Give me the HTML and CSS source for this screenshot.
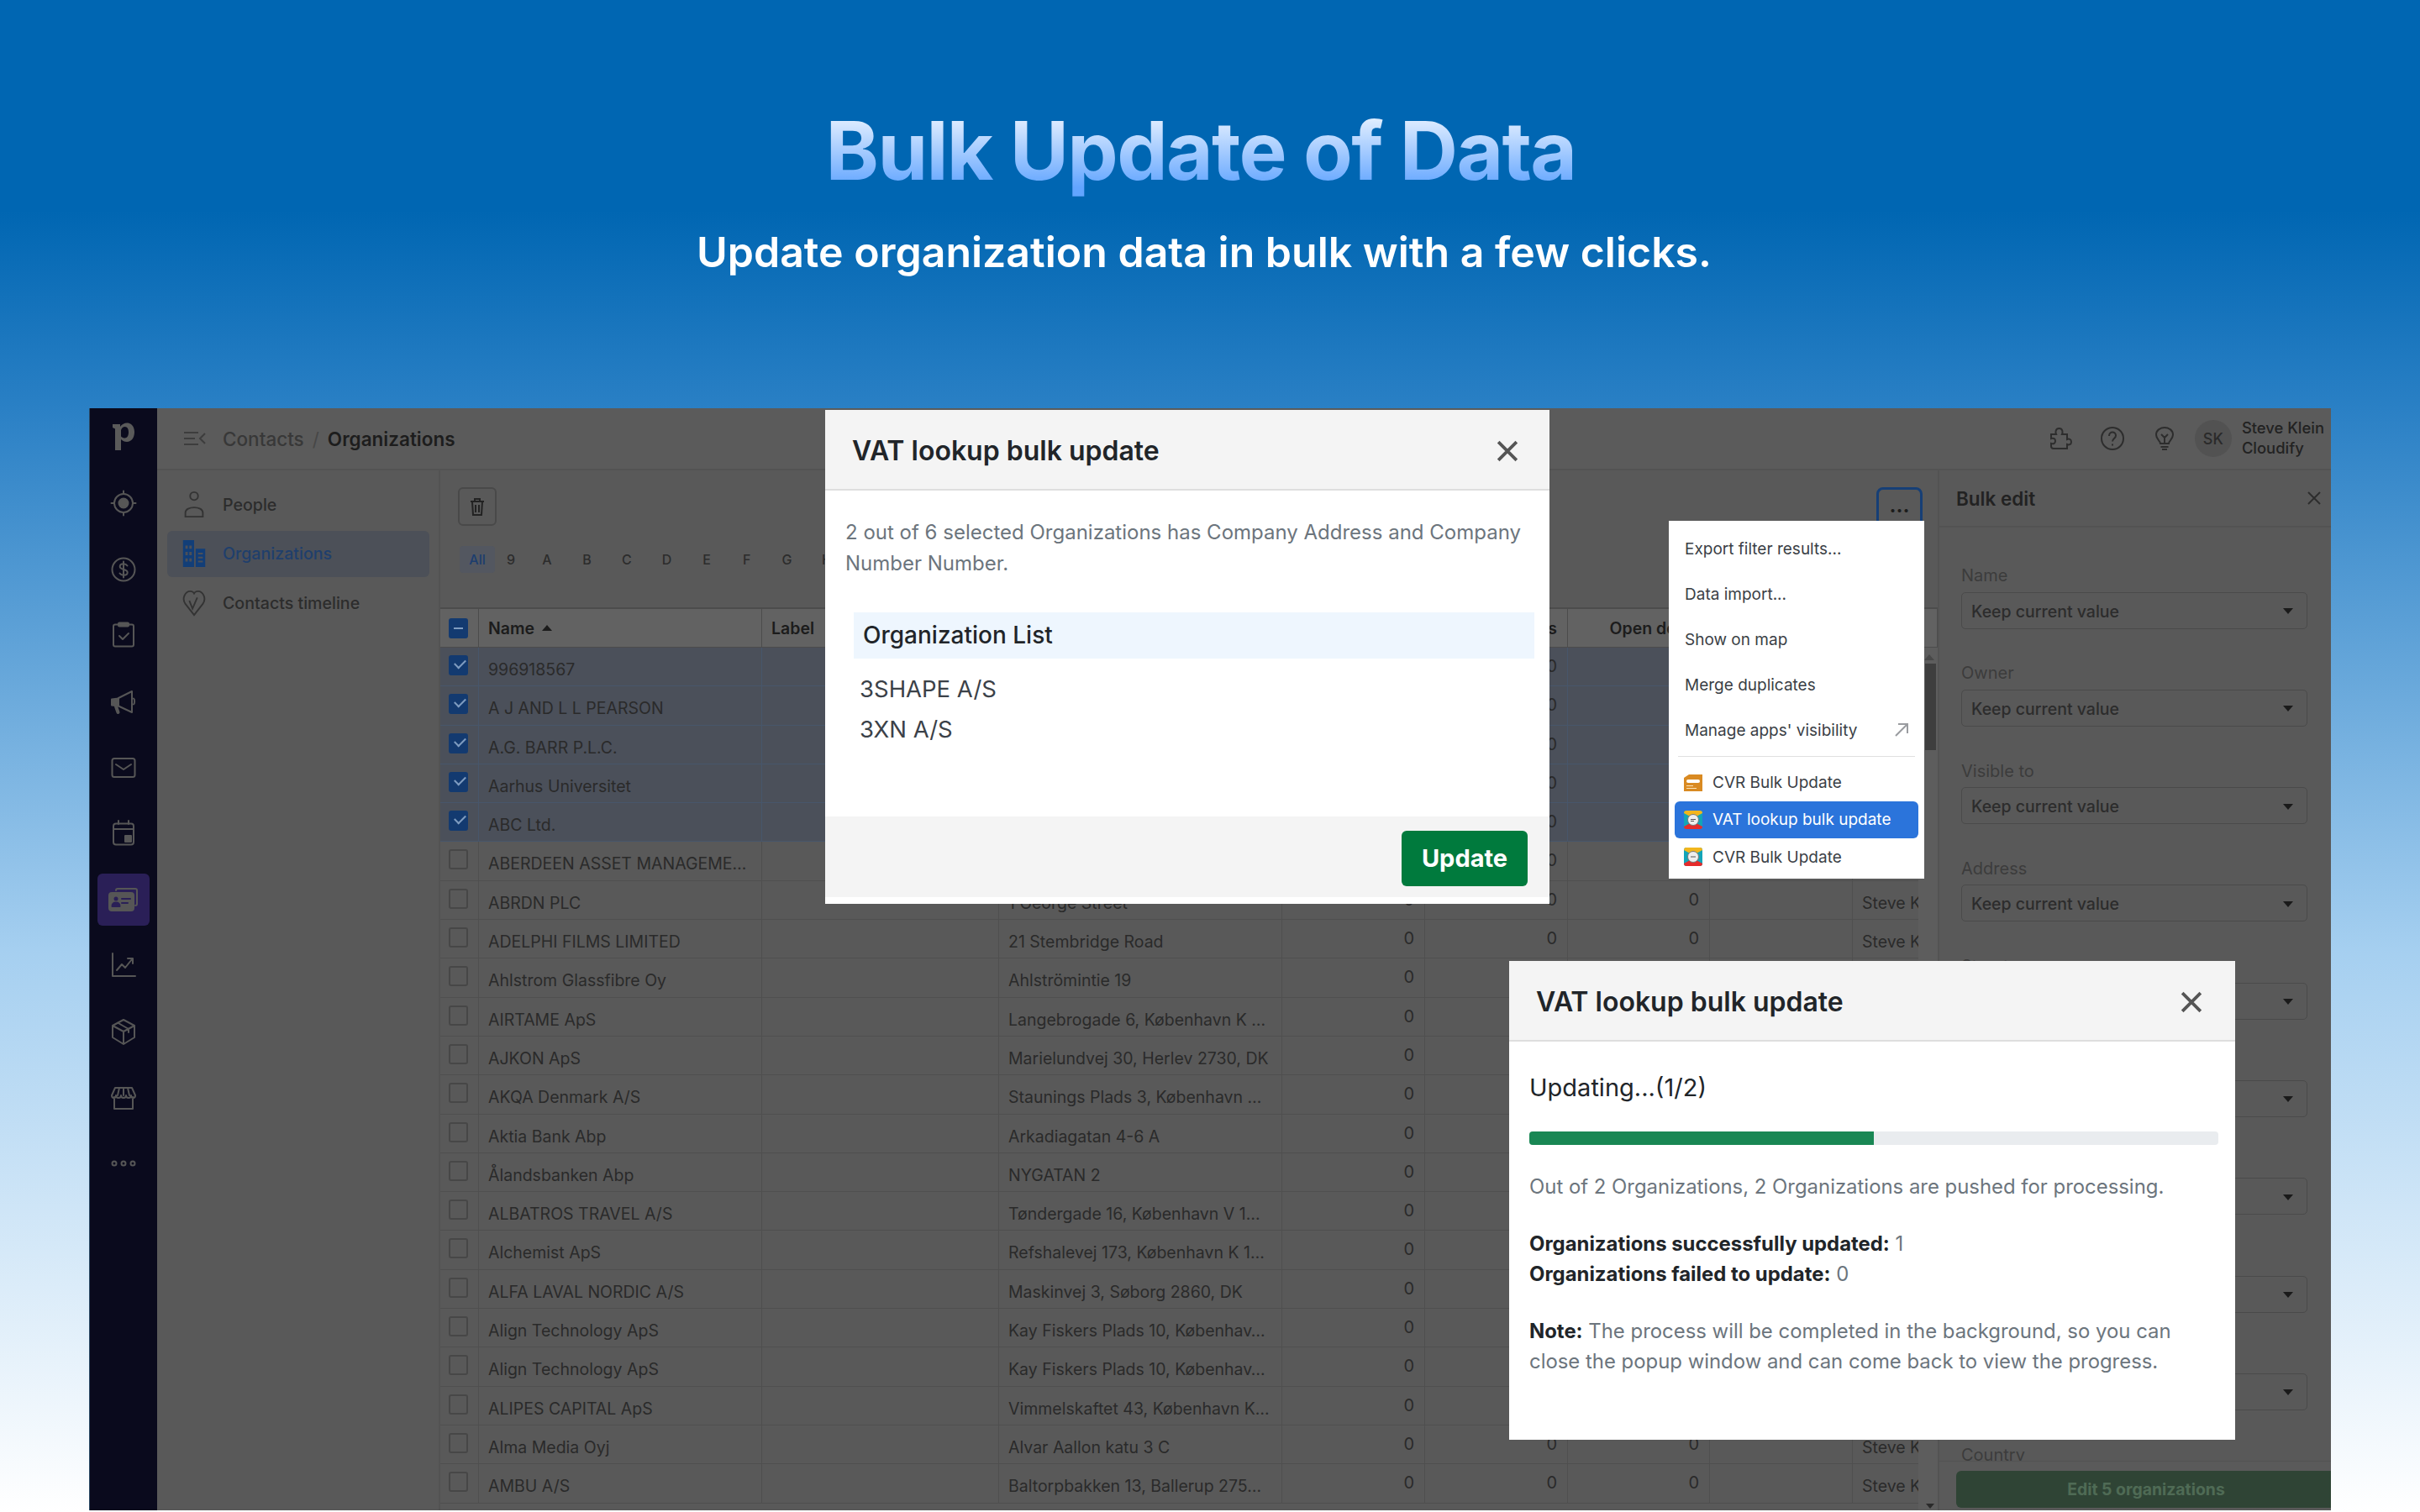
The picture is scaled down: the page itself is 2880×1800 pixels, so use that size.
FILE: index.html
```html
<!DOCTYPE html>
<html lang="en">
<head>
<meta charset="utf-8">
<title>Bulk Update of Data</title>
<link rel="stylesheet" href="styles.css">
</head>
<body>
<header class="hero">
  <h1 class="hero-title">Bulk Update of Data</h1>
  <p class="hero-sub">Update organization data in bulk with a few clicks.</p>
</header>

<section class="app">
  <nav class="rail">
    <div class="rail-logo">
      <svg class="logo" viewBox="0 0 26 34"><path fill-rule="evenodd" d="M0 2h9v3c2-3 5-4.500 8-4.500 5.500 0 9 4.500 9 11S22.500 23 17 23c-3 0-5-1-7-3v13H3V7.500L0 6zM10 9v7.500c1.500 1.500 3 2 4.500 2 3 0 4.500-3 4.500-7s-1.500-6.500-4.500-6.500c-2 0-3.500 1.500-4.500 4z"/></svg>
    </div>
    <div class="rail-item"><svg class="ri" viewBox="0 0 32 32"><circle cx="16" cy="16" r="11"/><circle class="solid" cx="16" cy="16" r="5.500"/><path d="M16 1.500v3M16 27.500v3M1.500 16h3M27.500 16h3"/></svg></div>
    <div class="rail-item"><svg class="ri" viewBox="0 0 32 32"><circle cx="16" cy="16" r="13.500"/><path d="M20.500 11.500c-1-1.500-2.500-2.200-4.500-2.200-2.500 0-4.300 1.300-4.300 3.300 0 4.500 9 2.400 9 6.900 0 2-2 3.200-4.500 3.200-2 0-3.700-.7-4.700-2.200M16 6.500v19"/></svg></div>
    <div class="rail-item"><svg class="ri" viewBox="0 0 32 32"><rect x="4" y="3.500" width="24" height="26" rx="2"/><rect class="solid" x="10" y="1.500" width="12" height="4" rx="1"/><path d="M11 17l4 4 7-7"/></svg></div>
    <div class="rail-item"><svg class="ri" viewBox="0 0 32 32"><path class="solid" d="M2 13.500l8-1v9l-8-1z"/><path d="M10 12L26 4v25L10 21.500"/><path d="M28 12.500c1.500 1 1.500 6 0 7"/><path class="wide" d="M7 22l2.500 7"/></svg></div>
    <div class="rail-item"><svg class="ri" viewBox="0 0 32 32"><rect x="2.500" y="5" width="27" height="22" rx="2.500"/><path d="M7 12l9 6 9-6"/></svg></div>
    <div class="rail-item"><svg class="ri" viewBox="0 0 32 32"><rect x="4" y="4.500" width="24" height="25" rx="3"/><path d="M4 11h24M10 1v4M22 1v4"/><rect class="solid" x="18" y="19" width="7" height="7"/></svg></div>
    <div class="rail-item"><div class="rail-active"><svg class="ri ri-big" viewBox="0 0 36 32"><path d="M9 5a2 2 0 0 1 2-2h21a2 2 0 0 1 2 2v16a2 2 0 0 1-2 2"/><rect class="solid" x="1" y="8" width="29" height="21" rx="3"/><circle class="cut" cx="9" cy="15" r="2.500"/><path class="cut-line" d="M4.500 24c0-3 2-4.500 4.500-4.500s4.500 1.500 4.500 4.500zM16 15h10M16 20h7"/></svg></div></div>
    <div class="rail-item"><svg class="ri" viewBox="0 0 32 32"><path d="M3 2v27h27M8 22l6-7 4 4 8-10M21 8h6v6"/></svg></div>
    <div class="rail-item"><svg class="ri" viewBox="0 0 32 32"><path d="M16 2l13 7v14l-13 8-13-8V9zM3 9l13 7 13-7M16 16v15M9 5.500l13 7.500v4"/></svg></div>
    <div class="rail-item"><svg class="ri" viewBox="0 0 32 32"><path d="M5 15v14h22V15M6 4h20l4 9c0 4-5 4-5 0 0 4-6 4-6 0 0 4-6 4-6 0 0 4-6 4-6 0 0 4-5 4-5 0zM11 4l-2 9M16 4v9M21 4l2 9"/></svg></div>
    <div class="rail-item"><svg class="ri" viewBox="0 0 32 32"><circle cx="5" cy="16" r="2.500"/><circle cx="16" cy="16" r="2.500"/><circle cx="27" cy="16" r="2.500"/></svg></div>
  </nav>

  <div class="workspace">
    <div class="topbar">
      <svg class="menu-toggle" viewBox="0 0 26 18"><path d="M0 2h17M0 9h13M0 16h17M25 3l-6 6 6 6"/></svg>
      <span class="crumb">Contacts</span><span class="crumb-sep">/</span><span class="crumb-current">Organizations</span>
      <div class="topbar-right">
        <svg class="top-icon" viewBox="0 0 28 28"><path d="M3 9h6c-1-2-1-7 3.500-7S17 7 16 9h6v6c2-1 5-.5 5 3s-3 4-5 3v5H6a3 3 0 0 1-3-3v-3c3 1 5-.5 5-3s-2-4-5-3z"/></svg>
        <svg class="top-icon" viewBox="0 0 28 28"><circle cx="14" cy="14" r="13"/><path d="M10 11c0-3 2-4.500 4-4.500s4 1.500 4 4c0 3.500-4 3.500-4 7M14 20.500v2"/></svg>
        <svg class="top-icon" viewBox="0 0 28 28"><path d="M9 20c0-3-5-5-5-10.500C4 4.500 8.500 1 14 1s10 3.500 10 8.500C24 15 19 17 19 20zM9.500 24h9M11 27h6M10 9l4 4 4-4M14 13v7"/></svg>
        <span class="avatar">SK</span>
        <div class="user"><span>Steve Klein</span><span>Cloudify</span></div>
      </div>
    </div>

    <div class="columns">
      <aside class="subnav">
        <a class="subnav-item"><svg class="sub-icon" viewBox="0 0 28 36"><circle cx="14" cy="7" r="5"/><path d="M3 33v-5c0-9 22-9 22 0v5z"/></svg>People</a>
        <a class="subnav-item is-active"><svg class="sub-icon solid-icon" viewBox="0 0 28 36"><path fill-rule="evenodd" d="M0 1h14v34H0zM3 8v4h3V8zm5 0v4h3V8zM3 16v4h3v-4zm5 0v4h3v-4zM3 24v4h3v-4zm5 0v4h3v-4zM16 12h12v23H16zm3 5v2h6v-2zm0 5v2h6v-2zm0 5v2h6v-2z"/></svg>Organizations</a>
        <a class="subnav-item"><svg class="sub-icon" viewBox="0 0 28 36"><path d="M14 33L3 19C-2 12 3 3 9 3c3 0 5 2 5 4 0-2 2-4 5-4 6 0 11 9 6 16zM8 15l4 10 6-14"/></svg>Contacts timeline</a>
      </aside>

      <main class="content">
        <div class="toolbar">
          <div class="toolbar-left">
            <button class="trash-btn"><svg class="trash" viewBox="0 0 18 22"><path d="M1 5h16M6 5V2h6v3M3 5l1 16h10l1-16M7 9v9M11 9v9"/></svg></button>
            <div class="alpha"><span class="alpha-all">All</span><span class="alpha-nine">9</span><span>A</span><span>B</span><span>C</span><span>D</span><span>E</span><span>F</span><span>G</span><span>H</span></div>
          </div>
          <button class="more-btn">&#8230;</button>
        </div>

        <div class="table">
          <div class="row head">
            <span class="cell check"><i class="box mixed"></i></span>
            <span class="cell">Name <i class="sort"></i></span><span class="cell">Label</span><span class="cell">Address</span>
            <span class="cell num">People</span><span class="cell num">Closed deals</span><span class="cell num">Open deals</span><span class="cell">Next activity</span><span class="cell">Owner</span>
          </div>
          <div class="scroll">
            <div class="rows">
              <div class="row sel"><span class="cell check"><i class="box on"></i></span><span class="cell">996918567</span><span class="cell"></span><span class="cell"></span><span class="cell num">0</span><span class="cell num">0</span><span class="cell num">0</span><span class="cell"></span><span class="cell">Steve Klein</span></div>
              <div class="row sel"><span class="cell check"><i class="box on"></i></span><span class="cell">A J AND L L PEARSON</span><span class="cell"></span><span class="cell"></span><span class="cell num">0</span><span class="cell num">0</span><span class="cell num">0</span><span class="cell"></span><span class="cell">Steve Klein</span></div>
              <div class="row sel"><span class="cell check"><i class="box on"></i></span><span class="cell">A.G. BARR P.L.C.</span><span class="cell"></span><span class="cell"></span><span class="cell num">0</span><span class="cell num">0</span><span class="cell num">0</span><span class="cell"></span><span class="cell">Steve Klein</span></div>
              <div class="row sel"><span class="cell check"><i class="box on"></i></span><span class="cell">Aarhus Universitet</span><span class="cell"></span><span class="cell"></span><span class="cell num">0</span><span class="cell num">0</span><span class="cell num">0</span><span class="cell"></span><span class="cell">Steve Klein</span></div>
              <div class="row sel"><span class="cell check"><i class="box on"></i></span><span class="cell">ABC Ltd.</span><span class="cell"></span><span class="cell"></span><span class="cell num">0</span><span class="cell num">0</span><span class="cell num">0</span><span class="cell"></span><span class="cell">Steve Klein</span></div>
              <div class="row"><span class="cell check"><i class="box"></i></span><span class="cell">ABERDEEN ASSET MANAGEME&#8230;</span><span class="cell"></span><span class="cell"></span><span class="cell num">0</span><span class="cell num">0</span><span class="cell num">0</span><span class="cell"></span><span class="cell">Steve Klein</span></div>
              <div class="row"><span class="cell check"><i class="box"></i></span><span class="cell">ABRDN PLC</span><span class="cell"></span><span class="cell">1 George Street</span><span class="cell num">0</span><span class="cell num">0</span><span class="cell num">0</span><span class="cell"></span><span class="cell">Steve Klein</span></div>
              <div class="row"><span class="cell check"><i class="box"></i></span><span class="cell">ADELPHI FILMS LIMITED</span><span class="cell"></span><span class="cell">21 Stembridge Road</span><span class="cell num">0</span><span class="cell num">0</span><span class="cell num">0</span><span class="cell"></span><span class="cell">Steve Klein</span></div>
              <div class="row"><span class="cell check"><i class="box"></i></span><span class="cell">Ahlstrom Glassfibre Oy</span><span class="cell"></span><span class="cell">Ahlströmintie 19</span><span class="cell num">0</span><span class="cell num">0</span><span class="cell num">0</span><span class="cell"></span><span class="cell">Steve Klein</span></div>
              <div class="row"><span class="cell check"><i class="box"></i></span><span class="cell">AIRTAME ApS</span><span class="cell"></span><span class="cell">Langebrogade 6, København K &#8230;</span><span class="cell num">0</span><span class="cell num">0</span><span class="cell num">0</span><span class="cell"></span><span class="cell">Steve Klein</span></div>
              <div class="row"><span class="cell check"><i class="box"></i></span><span class="cell">AJKON ApS</span><span class="cell"></span><span class="cell">Marielundvej 30, Herlev 2730, DK</span><span class="cell num">0</span><span class="cell num">0</span><span class="cell num">0</span><span class="cell"></span><span class="cell">Steve Klein</span></div>
              <div class="row"><span class="cell check"><i class="box"></i></span><span class="cell">AKQA Denmark A/S</span><span class="cell"></span><span class="cell">Staunings Plads 3, København &#8230;</span><span class="cell num">0</span><span class="cell num">0</span><span class="cell num">0</span><span class="cell"></span><span class="cell">Steve Klein</span></div>
              <div class="row"><span class="cell check"><i class="box"></i></span><span class="cell">Aktia Bank Abp</span><span class="cell"></span><span class="cell">Arkadiagatan 4-6 A</span><span class="cell num">0</span><span class="cell num">0</span><span class="cell num">0</span><span class="cell"></span><span class="cell">Steve Klein</span></div>
              <div class="row"><span class="cell check"><i class="box"></i></span><span class="cell">Ålandsbanken Abp</span><span class="cell"></span><span class="cell">NYGATAN 2</span><span class="cell num">0</span><span class="cell num">0</span><span class="cell num">0</span><span class="cell"></span><span class="cell">Steve Klein</span></div>
              <div class="row"><span class="cell check"><i class="box"></i></span><span class="cell">ALBATROS TRAVEL A/S</span><span class="cell"></span><span class="cell">Tøndergade 16, København V 1&#8230;</span><span class="cell num">0</span><span class="cell num">0</span><span class="cell num">0</span><span class="cell"></span><span class="cell">Steve Klein</span></div>
              <div class="row"><span class="cell check"><i class="box"></i></span><span class="cell">Alchemist ApS</span><span class="cell"></span><span class="cell">Refshalevej 173, København K 1&#8230;</span><span class="cell num">0</span><span class="cell num">0</span><span class="cell num">0</span><span class="cell"></span><span class="cell">Steve Klein</span></div>
              <div class="row"><span class="cell check"><i class="box"></i></span><span class="cell">ALFA LAVAL NORDIC A/S</span><span class="cell"></span><span class="cell">Maskinvej 3, Søborg 2860, DK</span><span class="cell num">0</span><span class="cell num">0</span><span class="cell num">0</span><span class="cell"></span><span class="cell">Steve Klein</span></div>
              <div class="row"><span class="cell check"><i class="box"></i></span><span class="cell">Align Technology ApS</span><span class="cell"></span><span class="cell">Kay Fiskers Plads 10, Københav&#8230;</span><span class="cell num">0</span><span class="cell num">0</span><span class="cell num">0</span><span class="cell"></span><span class="cell">Steve Klein</span></div>
              <div class="row"><span class="cell check"><i class="box"></i></span><span class="cell">Align Technology ApS</span><span class="cell"></span><span class="cell">Kay Fiskers Plads 10, Københav&#8230;</span><span class="cell num">0</span><span class="cell num">0</span><span class="cell num">0</span><span class="cell"></span><span class="cell">Steve Klein</span></div>
              <div class="row"><span class="cell check"><i class="box"></i></span><span class="cell">ALIPES CAPITAL ApS</span><span class="cell"></span><span class="cell">Vimmelskaftet 43, København K&#8230;</span><span class="cell num">0</span><span class="cell num">0</span><span class="cell num">0</span><span class="cell"></span><span class="cell">Steve Klein</span></div>
              <div class="row"><span class="cell check"><i class="box"></i></span><span class="cell">Alma Media Oyj</span><span class="cell"></span><span class="cell">Alvar Aallon katu 3 C</span><span class="cell num">0</span><span class="cell num">0</span><span class="cell num">0</span><span class="cell"></span><span class="cell">Steve Klein</span></div>
              <div class="row"><span class="cell check"><i class="box"></i></span><span class="cell">AMBU A/S</span><span class="cell"></span><span class="cell">Baltorpbakken 13, Ballerup 275&#8230;</span><span class="cell num">0</span><span class="cell num">0</span><span class="cell num">0</span><span class="cell"></span><span class="cell">Steve Klein</span></div>
            </div>
            <div class="scrollbar"><i class="sb-up"></i><i class="sb-thumb"></i><i class="sb-down"></i></div>
          </div>
        </div>
      </main>

      <aside class="bulk">
        <div class="bulk-head"><span>Bulk edit</span><svg class="bulk-close" viewBox="0 0 16 16"><path d="M1 1l14 14M15 1L1 15"/></svg></div>
        <div class="bulk-form">
          <div class="field"><label>Name</label><div class="select">Keep current value<i class="caret"></i></div></div>
          <div class="field"><label>Owner</label><div class="select">Keep current value<i class="caret"></i></div></div>
          <div class="field"><label>Visible to</label><div class="select">Keep current value<i class="caret"></i></div></div>
          <div class="field"><label>Address</label><div class="select">Keep current value<i class="caret"></i></div></div>
          <div class="field"><label>Street</label><div class="select">Keep current value<i class="caret"></i></div></div>
          <div class="field"><label>City</label><div class="select">Keep current value<i class="caret"></i></div></div>
          <div class="field"><label>State</label><div class="select">Keep current value<i class="caret"></i></div></div>
          <div class="field"><label>Region</label><div class="select">Keep current value<i class="caret"></i></div></div>
          <div class="field"><label>Postal code</label><div class="select">Keep current value<i class="caret"></i></div></div>
          <div class="field"><label>Country</label><div class="select">Keep current value<i class="caret"></i></div></div>
        </div>
        <div class="bulk-foot"><button class="bulk-submit">Edit 5 organizations</button></div>
      </aside>
    </div>
  </div>

  <div class="dropdown">
    <div class="dd-item">Export filter results...</div>
    <div class="dd-item">Data import...</div>
    <div class="dd-item">Show on map</div>
    <div class="dd-item">Merge duplicates</div>
    <div class="dd-item dd-manage">Manage apps' visibility<svg class="dd-arrow" viewBox="0 0 18 18"><path d="M2 16L16 2M5 2h11v11"/></svg></div>
    <div class="dd-sep"></div>
    <div class="dd-app"><svg class="app-icon" viewBox="0 0 22 22"><path fill="#d98a22" d="M0 6l6-4h16v20H0z"/><rect fill="#fff" x="3" y="8" width="16" height="4" rx="2"/><path fill="#fbe3b8" d="M3 15h8v1H3zM3 18h12v1H3z"/></svg>CVR Bulk Update</div>
    <div class="dd-app is-current"><svg class="app-icon" viewBox="0 0 22 22"><rect width="22" height="22" rx="3" fill="#12a5b8"/><path fill="#f2b61d" d="M0 3a3 3 0 0 1 3-3h16a3 3 0 0 1 3 3L11 9z"/><path fill="#e52b2b" d="M0 19a3 3 0 0 0 3 3h16a3 3 0 0 0 3-3l-11-6z"/><circle cx="11" cy="11" r="6.500" fill="#eee" stroke="#777"/><path d="M8 10.500h6M8 12.500h4" stroke="#555"/></svg>VAT lookup bulk update</div>
    <div class="dd-app"><svg class="app-icon" viewBox="0 0 22 22"><rect width="22" height="22" rx="3" fill="#12a5b8"/><path fill="#f2b61d" d="M0 3a3 3 0 0 1 3-3h16a3 3 0 0 1 3 3L11 9z"/><path fill="#e52b2b" d="M0 19a3 3 0 0 0 3 3h16a3 3 0 0 0 3-3l-11-6z"/><circle cx="11" cy="11" r="6.500" fill="#eee" stroke="#777"/><path d="M8 11h6" stroke="#555"/></svg>CVR Bulk Update</div>
  </div>

  <div class="modal modal-confirm">
    <div class="modal-head"><span>VAT lookup bulk update</span><svg class="modal-close" viewBox="0 0 24 24"><path d="M2 2l20 20M22 2L2 22"/></svg></div>
    <div class="confirm-body">
      <p class="confirm-desc">2 out of 6 selected Organizations has Company Address and Company Number Number.</p>
      <div class="org-title">Organization List</div>
      <ul class="org-list"><li>3SHAPE A/S</li><li>3XN A/S</li></ul>
    </div>
    <div class="confirm-foot"><button class="update-btn">Update</button></div>
  </div>

  <div class="modal modal-progress">
    <div class="modal-head"><span>VAT lookup bulk update</span><svg class="modal-close" viewBox="0 0 24 24"><path d="M2 2l20 20M22 2L2 22"/></svg></div>
    <div class="progress-body">
      <div class="progress-title">Updating...(1/2)</div>
      <div class="progress"><div class="progress-fill" style="width:50%"></div></div>
      <p class="muted">Out of 2 Organizations, 2 Organizations are pushed for processing.</p>
      <p class="stats"><b>Organizations successfully updated:</b> 1<br><b>Organizations failed to update:</b> 0</p>
      <p class="note"><b>Note:</b> The process will be completed in the background, so you can close the popup window and can come back to view the progress.</p>
    </div>
  </div>
</section>
</body>
</html>
```

FILE: styles.css
```css
* { box-sizing: border-box; }
html, body { margin: 0; padding: 0; }
body {
  width: 2880px;
  height: 1800px;
  overflow: hidden;
  font-family: Inter, "Liberation Sans", sans-serif;
  background: linear-gradient(180deg, #0066b2 0, #0066b2 250px, #2a80c5 486px, #a5cff0 1130px, #ffffff 1800px);
}
p { margin: 0; }
button { font-family: inherit; border: 0; padding: 0; }
i { display: block; font-style: normal; }

.hero { height: 486px; padding: 121px 14px 0 0; text-align: center; }
.hero-title {
  margin: 0 8px 0 0;
  font-size: 96px;
  line-height: 116px;
  font-weight: 700;
  letter-spacing: -1.700px;
  background: linear-gradient(180deg, #eaf3ff 12%, #62a5ff 88%);
  -webkit-background-clip: text;
  background-clip: text;
  color: transparent;
  display: inline-block;
}
.hero-sub { margin-top: 34px; font-size: 50px; line-height: 58px; font-weight: 600; color: #fff; }

.app {
  position: relative;
  margin-left: 106px;
  width: 2668px;
  height: 1312px;
  display: flex;
  overflow: hidden;
  background: #595959;
  color: #262626;
}

/* left rail */
.rail { width: 81px; flex: none; background: #0a0a1d; border-left: 1px solid #2a4a66; }
.rail-logo { height: 74px; display: flex; align-items: center; justify-content: center; padding-bottom: 6px; }
.logo { width: 26px; height: 34px; fill: #5a5a5a; }
.rail-item { height: 78.6px; display: flex; align-items: center; justify-content: center; }
.ri { width: 32px; height: 32px; fill: none; stroke: #565656; stroke-width: 2; stroke-linecap: round; stroke-linejoin: round; }
.ri .solid { fill: #565656; stroke: #565656; }
.ri .wide { stroke-width: 4; }
.ri .cut { fill: #2a1f57; stroke: none; }
.ri .cut-line { fill: #2a1f57; stroke: #2a1f57; }
.ri-big { width: 36px; height: 32px; }
.rail-active { width: 62px; height: 62px; border-radius: 6px; background: #2a1f57; display: flex; align-items: center; justify-content: center; }

/* workspace */
.workspace { flex: 1; min-width: 0; display: flex; flex-direction: column; }
.topbar { height: 74px; flex: none; display: flex; align-items: center; padding: 0 8px 0 32px; background: #5b5b5b; border-bottom: 2px solid #535353; font-size: 22.500px; }
.menu-toggle { width: 26px; height: 18px; margin-right: 20px; fill: none; stroke: #3d3d3d; stroke-width: 2; }
.crumb { color: #383838; font-weight: 500; }
.crumb-sep { color: #474747; margin: 0 10px; }
.crumb-current { color: #1d1d1d; font-weight: 600; }
.topbar-right { margin-left: auto; display: flex; align-items: center; }
.top-icon { width: 28px; height: 28px; margin-right: 34px; fill: none; stroke: #2d2d2d; stroke-width: 2; }
.avatar { width: 44px; height: 44px; margin-left: -12px; border-radius: 50%; background: #525252; display: flex; align-items: center; justify-content: center; font-size: 18px; font-weight: 500; color: #2a2a2a; }
.user { margin: -3px 0 0 12px; display: flex; flex-direction: column; font-size: 18.400px; line-height: 24px; font-weight: 500; color: #222; }

.columns { flex: 1; min-height: 0; display: flex; }

/* sub navigation */
.subnav { width: 337px; flex: none; padding: 13px 11px 0 12px; background: #595959; border-right: 2px solid #535353; display: flex; flex-direction: column; gap: 2px; }
.subnav-item { height: 55.500px; margin-bottom: 1px; padding-left: 18px; display: flex; align-items: center; gap: 20px; font-size: 19.600px; font-weight: 500; color: #2c2c2c; border-radius: 6px; }
.subnav-item.is-active { background: #4c5058; color: #1f3f6c; }
.sub-icon { width: 28px; height: 34px; flex: none; fill: none; stroke: #333; stroke-width: 2; }
.solid-icon { fill: #123e78; stroke: none; }

/* table area */
.content { width: 1782px; flex: none; display: flex; flex-direction: column; min-height: 0; }
.toolbar { height: 163px; flex: none; display: flex; justify-content: space-between; padding: 20px 18px 0 21px; }
.toolbar-left { display: flex; flex-direction: column; gap: 24px; }
.trash-btn { width: 46px; height: 46px; background: transparent; border: 2px solid #494949; border-radius: 6px; display: flex; align-items: center; justify-content: center; }
.trash { width: 18px; height: 22px; fill: none; stroke: #222; stroke-width: 2; }
.alpha { display: flex; align-items: center; margin-left: 2px; font-size: 16px; font-weight: 500; color: #2c2c2c; height: 32px; }
.alpha span { width: 47.600px; text-align: center; }
.alpha .alpha-all { width: 42px; height: 32px; line-height: 32px; background: #535760; border-radius: 4px; color: #1c3d6e; }
.alpha .alpha-nine { width: 38px; }
.more-btn { width: 55px; height: 50px; background: transparent; border: 3px solid #163f76; border-radius: 8px; font-size: 24px; font-weight: 700; color: #1c1c1c; line-height: 28px; padding-bottom: 6px; }

.table { flex: 1; min-height: 0; display: flex; flex-direction: column; border-top: 2px solid #4c4c4c; }
.scroll { flex: 1; min-height: 0; display: flex; overflow: hidden; }
.rows { width: 1759px; flex: none; }
.row { display: grid; grid-template-columns: 46px 337px 282px 337px 170px 170px 169px 170px 200px; height: 46.300px; font-size: 19.500px; color: #2a2a2a; border-bottom: 1px solid #4f4f4f; }
.cell { display: block; padding: 14px 11px 0; white-space: nowrap; overflow: hidden; border-right: 1px solid #4f4f4f; line-height: 24px; }
.cell.num { text-align: right; padding: 10px 12px 0; font-size: 20px; }
.cell.check { padding: 9px 0 0 10px; }
.box { width: 23px; height: 24px; border: 2px solid #474747; border-radius: 3px; position: relative; }
.box.on { background: #133a70; border-color: #133a70; }
.box.on::after { content: ""; position: absolute; left: 5px; top: 3px; width: 11px; height: 6px; border-left: 2px solid #7f9cc0; border-bottom: 2px solid #7f9cc0; transform: rotate(-45deg); }
.box.mixed { background: #133a70; border-color: #133a70; }
.box.mixed::after { content: ""; position: absolute; left: 4px; top: 9px; width: 11px; height: 2px; background: #7f9cc0; }
.row.sel { background: #4b505a; border-bottom-color: #47566b; }
.row.sel .cell { border-right-color: #47566b; }
.row.head { height: 46px; background: #626262; font-weight: 600; color: #1c1c1c; border-bottom: 1px solid #4c4c4c; width: 1782px; grid-template-columns: 46px 337px 282px 337px 170px 170px 169px 170px 101px; }
.row.head .cell { display: block; padding-top: 11px; border-right-color: #4c4c4c; font-size: 19.500px; }
.row.head .check { padding-top: 11px; }
.sort { display: inline-block; width: 0; height: 0; margin: 0 0 5px 4px; border: 6px solid transparent; border-top: 0; border-bottom: 7px solid #1c1c1c; vertical-align: middle; }

.scrollbar { flex: 1; position: relative; background: #5d5d5d; display: flex; flex-direction: column; align-items: flex-end; padding-right: 2px; }
.sb-up { width: 0; height: 0; margin: 8px 2px 4px 0; border: 6px solid transparent; border-top: 0; border-bottom: 7px solid #484848; }
.sb-thumb { width: 13px; height: 103px; background: #3e3e3e; }
.sb-down { width: 0; height: 0; margin-top: auto; margin-right: 2px; margin-bottom: 2px; border: 5px solid transparent; border-bottom: 0; border-top: 6px solid #2a2a2a; }

/* bulk edit */
.bulk { flex: 1; min-width: 0; display: flex; flex-direction: column; border-left: 2px solid #535353; background: #595959; overflow: hidden; }
.bulk-head { height: 68px; flex: none; display: flex; align-items: center; justify-content: space-between; padding: 0 12px 0 20px; border-bottom: 2px solid #535353; font-size: 22.500px; font-weight: 600; color: #222; }
.bulk-close { width: 16px; height: 16px; fill: none; stroke: #2d2d2d; stroke-width: 2; }
.bulk-form { flex: 1; min-height: 0; overflow: hidden; padding: 45px 28px 0 26px; display: flex; flex-direction: column; gap: 40.800px; }
.field { flex: none; height: 75.500px; }
.field label { display: block; height: 31.500px; font-size: 20px; line-height: 24px; color: #3c3c3c; }
.select { height: 44px; padding: 2px 16px 0 11px; display: flex; align-items: center; justify-content: space-between; border: 1px solid #4a4a4a; border-radius: 5px; font-size: 19.500px; font-weight: 500; color: #2c2c2c; }
.caret { width: 0; height: 0; border: 6px solid transparent; border-bottom: 0; border-top: 7px solid #1a1a1a; }
.bulk-foot { height: 59px; flex: none; padding: 11px 0 0 20px; background: #5a5a5a; border-top: 1px solid #535353; overflow: hidden; }
.bulk-submit { width: 520px; height: 44px; background: #2f4435; border-radius: 6px; color: #4f6b55; font-size: 19.400px; font-weight: 700; padding-right: 68px; }

/* overflow menu */
.dropdown { position: absolute; left: 1880px; top: 134px; width: 304px; height: 426px; padding: 6px 7px 0; background: #fff; color: #3b3f46; font-size: 19px; }
.dd-item { height: 54px; padding-left: 12px; display: flex; align-items: center; }
.dd-manage { justify-content: space-between; padding-right: 11px; }
.dd-arrow { width: 18px; height: 18px; fill: none; stroke: #9a9ca0; stroke-width: 2; }
.dd-sep { height: 1px; margin: 4px 4px 8px; background: #e0e0e0; }
.dd-app { height: 44.500px; padding-left: 11px; display: flex; align-items: center; gap: 12px; border-radius: 6px; }
.app-icon { width: 22px; height: 22px; flex: none; }
.dd-app.is-current { background: #2b74db; color: #fff; }

/* modals */
.modal { position: absolute; background: #fff; color: #212529; display: flex; flex-direction: column; }
.modal-confirm { left: 876px; top: 2px; width: 862px; height: 588px; padding-bottom: 8px; }
.modal-progress { left: 1690px; top: 658px; width: 864px; height: 570px; }
.modal-head { height: 96px; flex: none; display: flex; align-items: center; justify-content: space-between; padding: 3px 37px 0 32px; background: #f4f4f4; border-bottom: 2px solid #dedede; font-size: 32px; font-weight: 600; }
.modal-progress .modal-head { padding-right: 39px; }
.modal-close { width: 26px; height: 26px; fill: none; stroke: #555; stroke-width: 3.500; }

.confirm-body { flex: 1; min-height: 0; padding-top: 32px; }
.confirm-desc { width: 815px; margin-left: 24px; font-size: 24px; line-height: 36.500px; color: #6c757d; }
.org-title { margin: 40px 18px 0 34px; height: 54.500px; padding: 0 0 1px 11px; display: flex; align-items: center; background: #eef6fe; font-size: 28px; font-weight: 500; color: #212529; }
.org-list { list-style: none; margin: 12px 0 0; padding: 0 0 0 41px; font-size: 27.500px; line-height: 48px; color: #3b4148; }
.confirm-foot { height: 96px; flex: none; padding: 3px 26px 0 0; display: flex; align-items: center; justify-content: flex-end; background: #f4f4f4; }
.update-btn { width: 150px; height: 66px; background: #007a3d; border-radius: 6px; color: #fff; font-size: 29px; font-weight: 700; }

.progress-body { flex: 1; padding: 35px 20px 0 24px; display: flex; flex-direction: column; gap: 32px; font-size: 23.900px; line-height: 36px; color: #6c757d; }
.progress-title { height: 40px; font-size: 29px; line-height: 40px; color: #212529; }
.progress { height: 16px; background: #e9ecef; border-radius: 4px; overflow: hidden; }
.progress-fill { height: 100%; background: #198754; }
.progress-body b { color: #212529; font-weight: 700; }
.note { width: 790px; }
```
